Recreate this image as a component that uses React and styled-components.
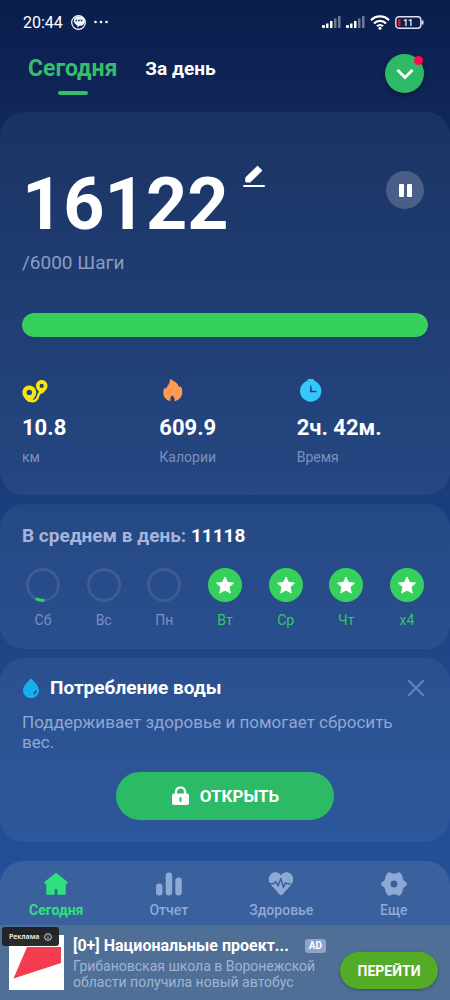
import { useState } from 'react'
import styled, { createGlobalStyle } from 'styled-components'

const GlobalStyle = createGlobalStyle`
    * {
        box-sizing: border-box;
    }
    body {
        margin: 0;
        background: #24529a;
        font-family: Roboto, "Noto Sans", sans-serif;
        color: #fff;
    }
    button {
        font-family: inherit;
        border: 0;
        padding: 0;
        cursor: pointer;
    }
    h2, p {
        margin: 0;
    }
`
const Page = styled.div`
    min-height: 100vh;
    display: flex;
    flex-direction: column;
    background: linear-gradient(180deg, #0a1e4d 0%, #102759 12%, #1a3d7b 50%, #21478a 68%, #235098 88%);
`
const StatusBar = styled.div`
    display: flex;
    align-items: center;
    justify-content: space-between;
    height: 44px;
    padding: 0 26px 0 23px;
`
const StatusGroup = styled.div`
    display: flex;
    align-items: center;
    gap: ${props => props.$gap}px;
    font-size: 16px;
    svg {
        display: block;
    }
`
const Header = styled.header`
    display: flex;
    align-items: flex-start;
    justify-content: space-between;
    height: 68px;
    padding: 10px 26px 0 28px;
`
const Tabs = styled.div`
    display: flex;
    align-items: flex-start;
    gap: 28px;
    padding-top: 1px;
`
const Tab = styled.button`
    display: flex;
    flex-direction: column;
    align-items: center;
    gap: 8px;
    background: none;
    line-height: 28px;
    font-weight: 700;
    font-size: ${props => props.$active ? 23 : 19}px;
    color: ${props => props.$active ? '#35bd6c' : '#fff'};
    &::after {
        content: "";
        width: 30px;
        height: 4px;
        border-radius: 2px;
        background: ${props => props.$active ? '#35bd6c' : 'transparent'};
    }
`
const RoundButton = styled.button`
    position: relative;
    display: grid;
    place-items: center;
    width: 39px;
    height: 39px;
    border-radius: 50%;
    background: #2dba66;
    box-shadow: 0 2px 4px rgba(0, 0, 0, .35);
`
const Dot = styled.span`
    position: absolute;
    top: 2px;
    right: 1px;
    width: 9px;
    height: 9px;
    border-radius: 50%;
    background: #ff0a4c;
`
const Card = styled.section`
    border-radius: 24px;
    background: rgba(170, 210, 225, .08);
    padding: ${props => props.$padding};
    margin-bottom: 9px;
`
const StepsRow = styled.div`
    display: flex;
    align-items: flex-start;
    gap: 14px;
`
const Steps = styled.div`
    font-size: 72px;
    line-height: 82px;
    font-weight: 700;
`
const EditButton = styled.button`
    background: none;
    height: 24px;
    color: #fff;
`
const PauseButton = styled.button`
    display: grid;
    place-items: center;
    width: 38px;
    height: 38px;
    margin: 7px 4px 0 auto;
    border-radius: 50%;
    background: rgba(255, 255, 255, .2);
`
const Goal = styled.p`
    margin-top: 5px;
    font-size: 19px;
    line-height: 24px;
    color: #8b9cc2;
`
const Progress = styled.div`
    height: 24px;
    margin-top: 38px;
    border-radius: 12px;
    background: rgba(255, 255, 255, .1);
    overflow: hidden;
`
const ProgressFill = styled.div`
    height: 100%;
    border-radius: 12px;
    background: #36d05c;
`
const Stats = styled.div`
    display: grid;
    grid-template-columns: repeat(3, 1fr);
    gap: 6px;
    margin-top: 42px;
`
const StatValue = styled.div`
    margin-top: 12px;
    font-size: 22px;
    line-height: 26px;
    font-weight: 700;
`
const StatLabel = styled.div`
    margin-top: 6px;
    font-size: 14px;
    line-height: 20px;
    color: #7d90ba;
`
const StatIcon = styled.svg`
    display: block;
`
const Average = styled.h2`
    font-size: 19px;
    line-height: 24px;
    font-weight: 700;
    color: #a5b4dc;
    span {
        color: #fff;
    }
`
const Days = styled.div`
    display: flex;
    justify-content: space-between;
    margin-top: 20px;
`
const Day = styled.div`
    display: flex;
    flex-direction: column;
    align-items: center;
    gap: 9px;
    width: 42px;
    font-size: 14px;
    line-height: 18px;
    color: ${props => props.$done ? '#33c863' : '#7b90bf'};
`
const WaterHead = styled.div`
    display: flex;
    align-items: center;
    justify-content: space-between;
`
const WaterTitle = styled.h2`
    display: flex;
    align-items: center;
    gap: 10px;
    font-size: 19px;
    line-height: 24px;
`
const CloseButton = styled.button`
    display: grid;
    background: none;
    margin-right: 3px;
`
const WaterText = styled.p`
    margin-top: 12px;
    font-size: 17px;
    line-height: 20px;
    color: #91a7d2;
`
const OpenButton = styled.button`
    display: flex;
    align-items: center;
    justify-content: center;
    gap: 10px;
    width: 218px;
    height: 48px;
    margin: 20px auto 0;
    border-radius: 24px;
    background: #2dba66;
    color: #fff;
    font-size: 17px;
    font-weight: 700;
`
const Nav = styled.nav`
    display: grid;
    grid-template-columns: repeat(4, 1fr);
    height: 64px;
    margin-top: auto;
    padding-top: 10px;
    border-radius: 24px 24px 0 0;
    background: #3a609d;
`
const NavLink = styled.a`
    display: flex;
    flex-direction: column;
    align-items: center;
    gap: 2px;
    font-size: 14px;
    line-height: 22px;
    font-weight: ${props => props.$active ? 700 : 500};
    text-decoration: none;
    color: ${props => props.$active ? '#2fe07c' : '#8fa9d6'};
`
const Ad = styled.aside`
    position: relative;
    display: flex;
    align-items: flex-start;
    height: 75px;
    padding: 10px 12px 0 9px;
    background: #506f97;
`
const AdBody = styled.div`
    flex: 1;
    min-width: 0;
    margin: 0 12px 0 9px;
`
const AdHead = styled.div`
    display: flex;
    align-items: center;
    gap: 16px;
`
const AdTitle = styled.h2`
    font-size: 16px;
    line-height: 22px;
    white-space: nowrap;
`
const AdBadge = styled.span`
    padding: 0 4px;
    border-radius: 3px;
    background: #8ea3cd;
    font-size: 10px;
    line-height: 14px;
    font-weight: 700;
`
const AdText = styled.p`
    margin-top: 1px;
    font-size: 14px;
    line-height: 16px;
    color: #a0b4d2;
`
const AdButton = styled.button`
    flex: none;
    width: 98px;
    height: 37px;
    margin-top: 17px;
    border-radius: 19px;
    background: #54ab28;
    box-shadow: 0 1px 3px rgba(0, 0, 0, .35);
    color: #fff;
    font-size: 14px;
    font-weight: 700;
`
const AdMark = styled.div`
    position: absolute;
    top: 2px;
    left: 2px;
    display: flex;
    align-items: center;
    gap: 5px;
    height: 19px;
    padding: 0 7px;
    border-radius: 3px;
    background: rgba(30, 32, 36, .95);
    font-family: "Open Sans", sans-serif;
    font-size: 7px;
    font-weight: 600;
`

const days = [
    { name: 'Сб', progress: 0.08 },
    { name: 'Вс' },
    { name: 'Пн' },
    { name: 'Вт', done: true },
    { name: 'Ср', done: true },
    { name: 'Чт', done: true },
    { name: 'x4', done: true }
]

function Signal() {
    return (
        <svg width="19" height="12" fill="#fff">
            <rect x="0" y="9" width="3" height="3" rx="1" />
            <rect x="4" y="7.500" width="2.500" height="4.500" />
            <rect x="8" y="5" width="2.500" height="7" />
            <rect x="12" y="2.500" width="2.500" height="9.500" opacity=".4" />
            <rect x="16" y="0" width="2.500" height="12" opacity=".4" />
        </svg>
    )
}

function DayMark({ done, progress }) {
    if (done) {
        return (
            <svg width="34" height="34" viewBox="0 0 34 34">
                <circle cx="17" cy="17" r="17" fill="#36d05c" />
                <path d="M17 9l2.500 5.500 6 .6-4.500 4 1.300 5.900L17 22l-5.300 3 1.300-5.900-4.500-4 6-.6z" fill="#fff" stroke="#fff" strokeWidth="1" strokeLinejoin="round" />
            </svg>
        )
    }
    return (
        <svg width="34" height="34" viewBox="0 0 34 34" fill="none">
            <circle cx="17" cy="17" r="15.500" stroke="#3d5c94" strokeWidth="3" />
            {progress && <path d="M11.200 31.300A15.500 15.500 0 0 0 17 32.300" stroke="#2fd06a" strokeWidth="3.300" strokeLinecap="round" />}
        </svg>
    )
}

const stats = [
    {
        value: '10.8',
        label: 'км',
        icon: (
            <StatIcon width="26" height="24" viewBox="0 0 26 24" fill="none">
                <path d="M7.500 21.500c5 1.700 8-.6 8.500-4.100.3-2.400 1.200-3.300 3.500-5" stroke="#f6e60f" strokeWidth="2.600" />
                <path fillRule="evenodd" fill="#f6e60f" d="M7.300 6.500c3.900 0 6.900 3 6.900 6.900 0 3.400-2.300 6.300-5.400 9-.8.700-2.100.7-2.900 0C2.800 19.700.4 16.800.4 13.400.4 9.500 3.400 6.500 7.300 6.500zm0 4.200a2.700 2.700 0 1 0 0 5.400 2.700 2.700 0 0 0 0-5.400z" />
                <path fillRule="evenodd" fill="#f6e60f" d="M19.700 1c3.300 0 5.800 2.500 5.800 5.700 0 3-2.200 5.300-4.700 7.500-.6.500-1.600.5-2.200 0-2.500-2.200-4.700-4.500-4.700-7.500C13.900 3.500 16.400 1 19.700 1zm0 3.800a2.100 2.100 0 1 0 0 4.200 2.100 2.100 0 0 0 0-4.200z" />
            </StatIcon>
        )
    },
    {
        value: '609.9',
        label: 'Калории',
        icon: (
            <StatIcon width="26" height="24" viewBox="0 0 26 24">
                <path fill="#ff9a55" d="M10.800 0C16 2 19.500 5.200 20 8.300c.8-.2 1.200-.6 1.600-1.200 1.300 2.200 1.700 4.400 1.600 6.600-.2 4.100-3.300 7.500-7.700 8.500.5-2.200-.3-4-2.300-5.900-1.600 1.700-2.200 3.500-1.700 5.800C7 21.300 4.300 17.800 4.300 13.800c0-2.200.5-3.700 1.600-5.200.5.700.8 1.100 1.500 1.300C7.500 7 11.600 5 10.800 0z" />
            </StatIcon>
        )
    },
    {
        value: '2ч. 42м.',
        label: 'Время',
        icon: (
            <StatIcon width="26" height="24" viewBox="0 0 26 24">
                <rect x="10.500" y="0" width="6.500" height="4" rx="1" fill="#32c8fb" />
                <circle cx="13.700" cy="12" r="10.700" fill="#32c8fb" />
                <path d="M13.300 6.300l.9 0 .6 5.200 4.700.6v1.100h-6.700z" fill="#24427c" />
            </StatIcon>
        )
    }
]

const links = [
    {
        name: 'Сегодня',
        icon: (
            <svg width="26" height="26" viewBox="0 0 26 26">
                <path fill="currentColor" stroke="currentColor" strokeWidth="1.500" strokeLinejoin="round" d="M13 2.500L2.200 11.300v1H4V23h7v-4.500c0-2 4-2 4 0V23h7V12.300h1.800v-1z" />
            </svg>
        )
    },
    {
        name: 'Отчет',
        icon: (
            <svg width="26" height="26" viewBox="0 0 26 26" fill="currentColor">
                <rect x="0" y="12.500" width="6.500" height="12" rx="3.200" />
                <rect x="9.700" y="1.500" width="6.500" height="23" rx="3.200" />
                <rect x="19.300" y="6.500" width="6.500" height="18" rx="3.200" />
            </svg>
        )
    },
    {
        name: 'Здоровье',
        icon: (
            <svg width="26" height="26" viewBox="0 0 26 26">
                <path fill="currentColor" d="M13 4.200C15.500.6 20.300.4 23 3.100c3 3 2.800 7.500.1 10.700L14.500 23.500c-.8.900-2.200.9-3 0L2.900 13.800C.2 10.600 0 6.100 3 3.100 5.700.4 10.500.6 13 4.200z" />
                <path fill="none" stroke="#3a609d" strokeWidth="1.500" strokeLinejoin="round" d="M0 12.800h5.500l2.200-2.300 2.300 4.500 2.800-7.500 2.700 9 2-4.700 1.500 1h3.500" />
            </svg>
        )
    },
    {
        name: 'Еще',
        icon: (
            <svg width="26" height="26" viewBox="0 0 26 26">
                <path fill="currentColor" fillRule="evenodd" stroke="currentColor" strokeWidth="1.500" strokeLinejoin="round" d="M7.200 2.300l2 0c1.800 1.700 5.800 1.700 7.600 0h2l2.200 3.500c-.6 2.300 1 4.900 3.400 5.600l.8 1.600-.8 1.600c-2.400.7-4 3.300-3.400 5.600l-2.200 3.500h-2c-1.800-1.700-5.800-1.700-7.600 0h-2L5 20.200c.6-2.300-1-4.900-3.400-5.600L.8 13l.8-1.600C4 10.700 5.600 8.100 5 5.800zM13 8.800a4.200 4.200 0 1 0 0 8.400 4.200 4.200 0 0 0 0-8.400z" />
            </svg>
        )
    }
]

function App() {
    const [tab, setTab] = useState('Сегодня')

    return (
        <Page>
            <GlobalStyle />
            <StatusBar>
                <StatusGroup $gap={8}>
                    20:44
                    <svg width="15" height="15" viewBox="0 0 15 15">
                        <circle cx="7.500" cy="7.500" r="6.800" fill="none" stroke="#fff" strokeWidth="1.200" />
                        <path fill="#f2f4fa" d="M3.500 3C6 .3 11 .6 13.200 3.500c1.400 2.500.6 5.500-1.700 6.800-1 .5-2.100.6-3.100.5L6.700 12.500l-.5-2.300C3.200 9 2 5.800 3.500 3z" />
                        <path d="M4.500 5.500h7" stroke="#0c214f" strokeWidth="1.500" strokeDasharray="1.600 1" />
                    </svg>
                    <svg width="14" height="4" fill="#fff">
                        <circle cx="1.500" cy="2" r="1.300" />
                        <circle cx="7" cy="2" r="1.300" />
                        <circle cx="12.500" cy="2" r="1.300" />
                    </svg>
                </StatusGroup>
                <StatusGroup $gap={5}>
                    <Signal />
                    <Signal />
                    <svg width="20" height="15" viewBox="0 0 20 15" fill="none" stroke="#fff" strokeWidth="2.200">
                        <path d="M1 5.300a12.500 12.500 0 0 1 18 0" />
                        <path d="M4 8.500a8.300 8.300 0 0 1 12 0" />
                        <path d="M7 11.300a4.300 4.300 0 0 1 6 0" />
                        <circle cx="10" cy="13.300" r="1.500" fill="#fff" stroke="none" />
                    </svg>
                    <svg width="29" height="13" viewBox="0 0 29 13">
                        <rect x=".8" y=".8" width="25" height="11.400" rx="3" fill="none" stroke="#dfe4f2" strokeWidth="1.400" />
                        <path d="M27.500 4.500v4" stroke="#dfe4f2" strokeWidth="2" />
                        <rect x="3" y="3" width="2.500" height="7" fill="#e3132f" />
                        <text x="13" y="9.800" textAnchor="middle" fontSize="9" fontWeight="500" fill="#fff">11</text>
                    </svg>
                </StatusGroup>
            </StatusBar>

            <Header>
                <Tabs>
                    {['Сегодня', 'За день'].map(name => (
                        <Tab key={name} $active={tab === name} onClick={() => setTab(name)}>{name}</Tab>
                    ))}
                </Tabs>
                <RoundButton aria-label="Развернуть">
                    <svg width="18" height="12" viewBox="0 0 18 12" fill="none">
                        <path d="M1.500 2L9 9.500 16.500 2" stroke="#fff" strokeWidth="3" />
                    </svg>
                    <Dot />
                </RoundButton>
            </Header>

            <Card $padding="52px 22px 28px">
                <StepsRow>
                    <Steps>16122</Steps>
                    <EditButton aria-label="Изменить">
                        <svg width="22" height="24" viewBox="0 0 22 24">
                            <path fill="#fff" stroke="#fff" strokeWidth="1" strokeLinejoin="round" d="M2.800 18v-4.500L14.500 2.200l4.500 4.300L7.300 18z" />
                            <rect y="21" width="22" height="2" rx="1" fill="#fff" />
                        </svg>
                    </EditButton>
                    <PauseButton aria-label="Пауза">
                        <svg width="13" height="13" fill="#fff">
                            <rect width="5" height="13" rx="1" />
                            <rect x="8" width="5" height="13" rx="1" />
                        </svg>
                    </PauseButton>
                </StepsRow>
                <Goal>/6000 Шаги</Goal>
                <Progress role="progressbar" aria-valuenow={16122} aria-valuemax={6000} aria-label="Шаги">
                    <ProgressFill />
                </Progress>
                <Stats>
                    {stats.map(stat => (
                        <div key={stat.label}>
                            {stat.icon}
                            <StatValue>{stat.value}</StatValue>
                            <StatLabel>{stat.label}</StatLabel>
                        </div>
                    ))}
                </Stats>
            </Card>

            <Card $padding="20px 22px 20px">
                <Average>В среднем в день: <span>11118</span></Average>
                <Days>
                    {days.map(day => (
                        <Day key={day.name} $done={day.done}>
                            <DayMark done={day.done} progress={day.progress} />
                            {day.name}
                        </Day>
                    ))}
                </Days>
            </Card>

            <Card $padding="18px 22px 22px">
                <WaterHead>
                    <WaterTitle>
                        <svg width="18" height="20" viewBox="0 0 18 20">
                            <path fill="#14b0f0" d="M9 0C11 3 17 7.500 17 12.200 17 16.600 13.500 20 9 20s-8-3.400-8-7.800C1 7.500 7 3 9 0z" />
                            <path d="M14 12.500c-.2 1.600-1 2.600-2.300 3.300" fill="none" stroke="#2b4d86" strokeWidth="1.800" />
                        </svg>
                        Потребление воды
                    </WaterTitle>
                    <CloseButton aria-label="Закрыть">
                        <svg width="18" height="18" viewBox="0 0 18 18">
                            <path d="M2 2l14 14M16 2L2 16" stroke="#6580ae" strokeWidth="2.400" strokeLinecap="round" />
                        </svg>
                    </CloseButton>
                </WaterHead>
                <WaterText>Поддерживает здоровье и помогает сбросить вес.</WaterText>
                <OpenButton>
                    <svg width="19" height="20" viewBox="0 0 19 20">
                        <path d="M5 9V5.800a4.500 4.500 0 0 1 9 0V9" fill="none" stroke="#fff" strokeWidth="2.200" />
                        <rect x="1" y="7.500" width="17" height="11.500" rx="2" fill="#fff" />
                        <rect x="8.500" y="11" width="2" height="5" rx="1" fill="#2dba66" />
                    </svg>
                    ОТКРЫТЬ
                </OpenButton>
            </Card>

            <Nav>
                {links.map((link, index) => (
                    <NavLink key={link.name} href="#" $active={index === 0}>
                        {link.icon}
                        {link.name}
                    </NavLink>
                ))}
            </Nav>
            <Ad>
                <svg width="55" height="55" viewBox="0 0 55 55">
                    <rect width="55" height="55" fill="#fff" />
                    <path d="M18 12h34v16L4.500 43.500z" fill="#f33c50" />
                </svg>
                <AdBody>
                    <AdHead>
                        <AdTitle>[0+] Национальные проект...</AdTitle>
                        <AdBadge>AD</AdBadge>
                    </AdHead>
                    <AdText>Грибановская школа в Воронежской области получила новый автобус</AdText>
                </AdBody>
                <AdButton>ПЕРЕЙТИ</AdButton>
                <AdMark>
                    Реклама
                    <svg width="8" height="8" viewBox="0 0 8 8" fill="none" stroke="#fff" strokeWidth=".8">
                        <circle cx="4" cy="4" r="3.400" />
                        <path d="M4 3.500V6M4 2v.8" />
                    </svg>
                </AdMark>
            </Ad>
        </Page>
    )
}

export default App
